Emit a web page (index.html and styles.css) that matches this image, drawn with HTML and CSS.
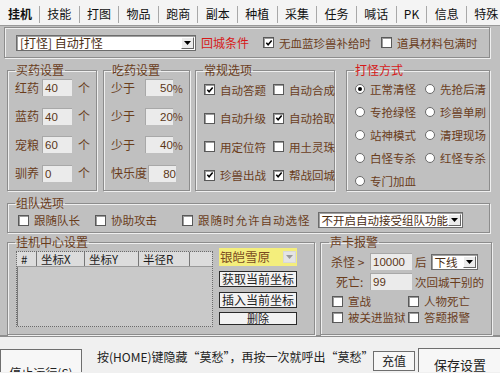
FILE: index.html
```html
<!DOCTYPE html>
<html lang="zh-CN">
<head>
  <meta charset="UTF-8">
  <title>挂机设置</title>
  <link rel="stylesheet" href="styles.css">
</head>
<body>
  <div class="app">
    <div class="tabs">
      <span class="tab active">挂机</span>
      <span class="tab">技能</span>
      <span class="tab">打图</span>
      <span class="tab">物品</span>
      <span class="tab">跑商</span>
      <span class="tab">副本</span>
      <span class="tab">种植</span>
      <span class="tab">采集</span>
      <span class="tab">任务</span>
      <span class="tab">喊话</span>
      <span class="tab">PK</span>
      <span class="tab">信息</span>
      <span class="tab last">特殊</span>
    </div>

    <div class="panel">
      <div class="toprow">
        <div class="combo mode">
          <span class="combo-text">[打怪] 自动打怪</span>
          <span class="arrow"><svg width="7" height="4" viewBox="0 0 7 4"><path d="M0 0h7l-3.5 4z"/></svg></span>
        </div>
        <span class="red return">回城条件</span>
        <span class="check c-first"><span class="cb"><svg viewBox="0 0 9 9"><path d="M1.5 4.3l2 2.2 4-4.8"/></svg></span>无血蓝珍兽补给时</span>
        <span class="check"><span class="cb"></span>道具材料包满时</span>
      </div>

      <div class="groups">
        <fieldset class="grp buy">
          <legend>买药设置</legend>
          <div class="frow"><span class="lbl">红药</span><span class="field">40</span><span class="unit">个</span></div>
          <div class="frow"><span class="lbl">蓝药</span><span class="field">40</span><span class="unit">个</span></div>
          <div class="frow"><span class="lbl">宠粮</span><span class="field">60</span><span class="unit">个</span></div>
          <div class="frow"><span class="lbl">驯养</span><span class="field">0</span><span class="unit">个</span></div>
        </fieldset>

        <fieldset class="grp eat">
          <legend>吃药设置</legend>
          <div class="frow"><span class="lbl wide">少于</span><span class="field right">50</span><span class="pct">%</span></div>
          <div class="frow"><span class="lbl wide">少于</span><span class="field right">20</span><span class="pct">%</span></div>
          <div class="frow"><span class="lbl wide">少于</span><span class="field right">40</span><span class="pct">%</span></div>
          <div class="frow"><span class="lbl wide">快乐度</span><span class="field right">80</span></div>
        </fieldset>

        <fieldset class="grp normal">
          <legend>常规选项</legend>
          <div class="grid2">
            <span class="check"><span class="cb"><svg viewBox="0 0 9 9"><path d="M1.5 4.3l2 2.2 4-4.8"/></svg></span>自动答题</span>
            <span class="check"><span class="cb"></span>自动合成</span>
            <span class="check"><span class="cb"></span>自动升级</span>
            <span class="check"><span class="cb"><svg viewBox="0 0 9 9"><path d="M1.5 4.3l2 2.2 4-4.8"/></svg></span>自动拾取</span>
            <span class="check"><span class="cb"></span>用定位符</span>
            <span class="check"><span class="cb"></span>用土灵珠</span>
            <span class="check"><span class="cb"><svg viewBox="0 0 9 9"><path d="M1.5 4.3l2 2.2 4-4.8"/></svg></span>珍兽出战</span>
            <span class="check"><span class="cb"><svg viewBox="0 0 9 9"><path d="M1.5 4.3l2 2.2 4-4.8"/></svg></span>帮战回城</span>
          </div>
        </fieldset>

        <fieldset class="grp fight">
          <legend class="red">打怪方式</legend>
          <div class="grid2 radios">
            <span class="check"><span class="rb on"></span>正常清怪</span>
            <span class="check"><span class="rb"></span>先抢后清</span>
            <span class="check"><span class="rb"></span>专抢绿怪</span>
            <span class="check"><span class="rb"></span>珍兽单刷</span>
            <span class="check"><span class="rb"></span>站神模式</span>
            <span class="check"><span class="rb"></span>清理现场</span>
            <span class="check"><span class="rb"></span>白怪专杀</span>
            <span class="check"><span class="rb"></span>红怪专杀</span>
            <span class="check"><span class="rb"></span>专门加血</span>
          </div>
        </fieldset>
      </div>

      <fieldset class="grp team">
        <legend>组队选项</legend>
        <div class="teamrow">
          <span class="check t1"><span class="cb"></span>跟随队长</span>
          <span class="check t2"><span class="cb"></span>协助攻击</span>
          <span class="check t3"><span class="cb"></span>跟随时允许自动选怪</span>
          <div class="combo accept">
            <span class="combo-text">不开启自动接受组队功能</span>
            <span class="arrow"><svg width="7" height="4" viewBox="0 0 7 4"><path d="M0 0h7l-3.5 4z"/></svg></span>
          </div>
        </div>
      </fieldset>

      <div class="bottom">
        <fieldset class="grp center">
          <legend>挂机中心设置</legend>
          <div class="centerbody">
            <div class="list">
              <div class="list-head">
                <span class="col c0">#</span>
                <span class="col c1">坐标X</span>
                <span class="col c2">坐标Y</span>
                <span class="col c3">半径R</span>
                <span class="col c4"></span>
              </div>
            </div>
            <div class="side">
              <div class="combo map">
                <span class="combo-text">银皑雪原</span>
                <span class="arrow flat"><svg width="7" height="4" viewBox="0 0 7 4"><path d="M0 0h7l-3.5 4z"/></svg></span>
              </div>
              <span class="btn">获取当前坐标</span>
              <span class="btn">插入当前坐标</span>
              <span class="btn small">删除</span>
            </div>
          </div>
        </fieldset>

        <fieldset class="grp alarm">
          <legend>声卡报警</legend>
          <div class="arow">
            <span class="alabel">杀怪 &gt;</span>
            <span class="field num">10000</span>
            <span class="after">后</span>
            <div class="combo offline">
              <span class="combo-text">下线</span>
              <span class="arrow"><svg width="7" height="4" viewBox="0 0 7 4"><path d="M0 0h7l-3.5 4z"/></svg></span>
            </div>
          </div>
          <div class="arow">
            <span class="alabel dead">死亡:</span>
            <span class="field num">99</span>
            <span class="after">次回城干别的</span>
          </div>
          <div class="grid2 alarmchecks">
            <span class="check"><span class="cb"></span>宣战</span>
            <span class="check"><span class="cb"></span>人物死亡</span>
            <span class="check"><span class="cb"></span>被关进监狱</span>
            <span class="check"><span class="cb"></span>答题报警</span>
          </div>
        </fieldset>
      </div>
    </div>

    <div class="footer">
      <span class="fbtn stop">停止运行(S)</span>
      <span class="hint">按(HOME)键隐藏“莫愁”，再按一次就呼出“莫愁”</span>
      <span class="fbtn pay">充值</span>
      <span class="fbtn save">保存设置</span>
    </div>
  </div>
</body>
</html>
```

FILE: styles.css
```css
* {
  box-sizing: border-box;
}
body {
  margin: 0;
  font-family: "Noto Sans CJK SC", "Liberation Sans", sans-serif;
  font-size: 11.5px;
  line-height: 14px;
  color: #6a3d1c;
  white-space: nowrap;
}
.app {
  width: 500px;
  height: 373px;
  overflow: hidden;
  background: #f0f0f0;
}

/* tab strip */
.tabs {
  display: flex;
  align-items: flex-end;
  height: 26px;
  padding-left: 3px;
  background: #f4f4f4;
  border-bottom: 1px solid #9a9a9a;
}
.tab {
  flex-shrink: 0;
  height: 17px;
  padding: 0 7.3px;
  margin-bottom: 2px;
  text-align: center;
  color: #111;
  font-size: 12px;
  line-height: 15px;
  border-right: 1px solid #a8a8a8;
}
.tab.active {
  font-weight: bold;
  padding: 0 7px 0 5px;
}
.tab.last {
  border-right: 0;
}

/* main grey area */
.panel {
  height: 311px;
  background: #c0c0c0;
  padding: 1px 0 0 4px;
  border-bottom: 2px solid #8e8e8e;
}
.red {
  color: #d61818;
}

.toprow {
  display: flex;
  align-items: center;
  width: 486px;
  height: 31px;
  padding-left: 11px;
  border: 1px solid #8c8c8c;
  box-shadow: inset 1px 1px 0 #efefef, 1px 1px 0 #efefef;
}
.return {
  margin: 0 14px 0 5px;
  font-size: 12px;
}
.c-first {
  margin-right: 10px;
}

/* combo boxes */
.combo {
  display: flex;
  align-items: center;
  flex-shrink: 0;
  height: 16px;
  background: #fff;
  border: 1px solid #6c6c6c;
  box-shadow: inset 1px 1px 0 #a0a0a0;
  color: #4a2c12;
}
.combo-text {
  flex: 1;
  padding-left: 3px;
  overflow: hidden;
}
.arrow {
  display: flex;
  align-items: center;
  justify-content: center;
  flex-shrink: 0;
  width: 13px;
  height: 12px;
  margin-right: 1px;
  background: #ececec;
  border: 1px solid;
  border-color: #fff #666 #666 #fff;
}
.arrow svg {
  fill: #000;
}
.arrow.flat {
  background: #e4e4e4;
  border-color: #d8d8d8;
}
.arrow.flat svg {
  fill: #9a9a9a;
}
.mode {
  width: 180px;
}
.mode .combo-text {
  font-size: 12px;
}

/* checkbox / radio */
.check {
  display: inline-flex;
  align-items: center;
  flex-shrink: 0;
}
.cb {
  display: inline-flex;
  align-items: center;
  justify-content: center;
  flex-shrink: 0;
  width: 11px;
  height: 11px;
  margin-right: 5px;
  background: #fff;
  border: 1px solid #595959;
  box-shadow: inset 1px 1px 0 #9c9c9c;
}
.cb svg {
  width: 8px;
  height: 8px;
  fill: none;
  stroke: #000;
  stroke-width: 1.7;
}
.rb {
  display: inline-flex;
  align-items: center;
  justify-content: center;
  flex-shrink: 0;
  width: 10px;
  height: 10px;
  margin-right: 5px;
  background: #fff;
  border: 1px solid #6a6a6a;
  border-radius: 50%;
}
.rb.on::after {
  content: "";
  width: 4px;
  height: 4px;
  border-radius: 50%;
  background: #000;
}

/* group boxes */
.grp {
  margin: 0;
  padding: 0 6px 0 7px;
  min-width: 0;
  flex-shrink: 0;
  border: 1px solid #8c8c8c;
  box-shadow: inset 1px 1px 0 #efefef, 1px 1px 0 #efefef;
}
.grp legend {
  padding: 0 1px;
  line-height: 14px;
  font-size: 12px;
}
.groups {
  display: flex;
  margin-top: 5px;
  padding-left: 3px;
}
.groups .grp {
  height: 128px;
}
.buy {
  width: 90px;
  margin-right: 6px !important;
}
.eat {
  width: 87px;
  margin-right: 5px !important;
}
.normal {
  width: 140px;
  margin-right: 11px !important;
}
.fight {
  width: 144px;
}

.frow {
  display: flex;
  align-items: center;
  height: 17px;
  margin-top: 11.5px;
}
.frow:first-of-type {
  margin-top: 2px;
}
.lbl {
  width: 27px;
  font-size: 12px;
}
.lbl.wide {
  width: 37px;
}
.field {
  display: inline-block;
  flex-shrink: 0;
  width: 30px;
  height: 17px;
  padding: 1px 2px 0;
  background: #ebebeb;
  border-top: 1px solid #a8a8a8;
  border-left: 1px solid #a8a8a8;
  color: #5a3617;
  font-family: "Liberation Sans", "Noto Sans CJK SC", sans-serif;
  font-size: 11.5px;
}
.field.right {
  width: 28px;
  text-align: right;
  padding-right: 0;
}
.unit {
  margin-left: 6px;
  font-size: 12px;
}
.pct {
  font-size: 11px;
}

.grid2 {
  display: grid;
  grid-template-columns: 69px 60px;
  row-gap: 11.5px;
  margin-top: 4px;
  padding-left: 1px;
}
.grid2 .check {
  height: 17px;
}
.radios {
  row-gap: 9px;
  margin-top: 5px;
  grid-template-columns: 70px 64px;
}
.radios .check {
  height: 14px;
}

/* team */
.team {
  width: 483px;
  height: 37px;
  margin: 5px 0 0 3px;
}
.teamrow {
  display: flex;
  align-items: center;
  height: 18px;
  margin-top: 1px;
  padding-left: 3px;
}
.t1 {
  margin-right: 15px;
}
.t2 {
  margin-right: 25px;
}
.t3 {
  margin-right: 7px;
  letter-spacing: 1px;
}
.accept {
  width: 145px;
}

/* bottom groups */
.bottom {
  display: flex;
  margin: 2px 0 0 3px;
}
.center {
  width: 308px;
  height: 100px;
  margin-right: 5px !important;
}
.centerbody {
  display: flex;
  margin-top: 2px;
  padding-left: 1px;
}
.list {
  flex-shrink: 0;
  width: 197px;
  height: 76px;
  background: #c9c9c9;
  border: 1px dotted #6a6a6a;
  box-shadow: inset 1px 1px 0 #7a7a7a;
}
.list-head {
  display: flex;
  height: 15px;
  background: #dcdcdc;
  border-bottom: 1px solid #9a9a9a;
  color: #1a1a1a;
}
.col {
  padding-left: 4px;
  border-right: 1px solid #777;
  line-height: 14px;
}
.c0 { width: 20px; }
.c1 { width: 48px; }
.c2 { width: 54px; }
.c3 { width: 51px; }
.c4 { flex: 1; border-right: 0; }

.side {
  display: flex;
  flex-direction: column;
  width: 78px;
  margin-left: 6px;
  margin-top: -3px;
}
.map {
  width: 78px;
  height: 18px;
  background: #f4ee7c;
  border: 0;
  box-shadow: none;
  color: #7a4a20;
}
.map .combo-text {
  padding-left: 1px;
  font-size: 12.5px;
}
.btn {
  display: block;
  height: 16px;
  margin-top: 5px;
  text-align: center;
  background: #f2f2f2;
  border: 1px solid #2a2a2a;
  color: #222;
  font-size: 12px;
  line-height: 14px;
}
.btn.small {
  height: 13px;
  margin-top: 4px;
  font-size: 11px;
  line-height: 11px;
}

.alarm {
  width: 172px;
  height: 100px;
  padding: 0 2px 0 8px;
}
.arow {
  display: flex;
  align-items: center;
  height: 17px;
  margin-top: 4px;
}
.arow + .arow {
  margin-top: 3px;
}
.alabel {
  width: 41px;
  padding-left: 2px;
  font-size: 12px;
}
.alabel.dead {
  padding-left: 7px;
}
.field.num {
  width: 42px;
}
.after {
  margin-left: 3px;
  font-size: 11.5px;
}
.offline {
  width: 47px;
  height: 16px;
  margin-left: 4px;
}
.alarmchecks {
  grid-template-columns: 76px 70px;
  row-gap: 0;
  margin-top: 3px;
  padding-left: 3px;
}
.alarmchecks .check {
  height: 16px;
}

/* footer */
.footer {
  display: flex;
  align-items: flex-start;
  height: 35px;
  overflow: hidden;
  background: #f0f0f0;
}
.fbtn {
  display: flex;
  align-items: center;
  justify-content: center;
  flex-shrink: 0;
  background: #f7f7f7;
  border: 1px solid #6e6e6e;
  color: #222;
  font-size: 12px;
}
.stop {
  width: 82px;
  height: 48px;
  margin-top: 12px;
}
.hint {
  flex-shrink: 0;
  margin: 13px 0 0 15px;
  width: 276px;
  color: #222;
  font-size: 12px;
}
.pay {
  width: 42px;
  height: 20px;
  margin-top: 14px;
}
.save {
  width: 84px;
  height: 34px;
  margin: 11px 0 0 3px;
  font-size: 13px;
}
```
